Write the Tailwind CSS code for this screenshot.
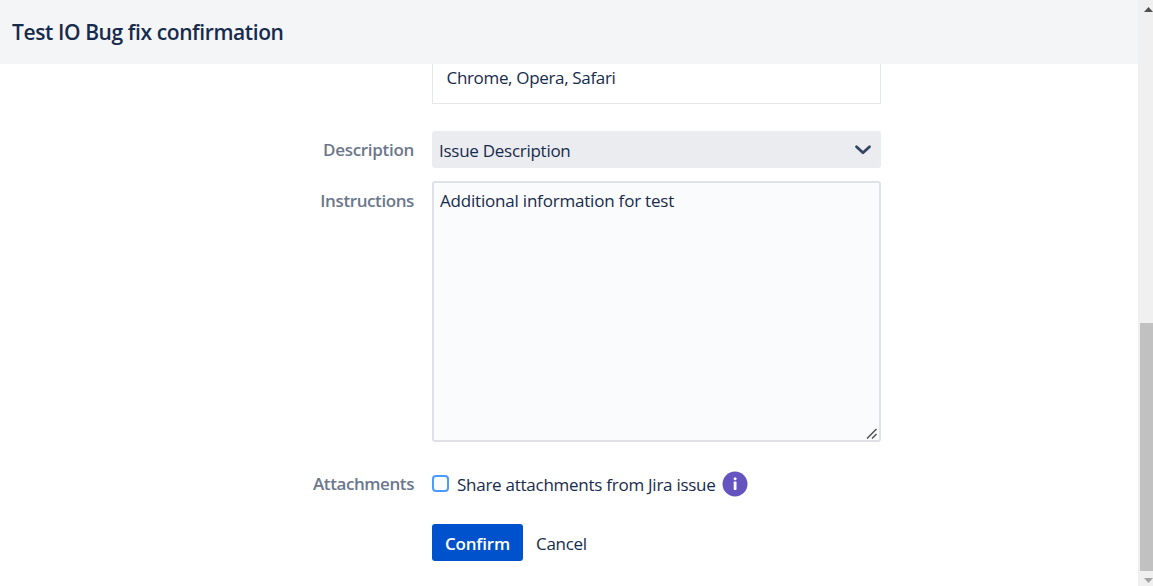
<!DOCTYPE html>
<html lang="en">
<head>
<meta charset="utf-8">
<title>Test IO Bug fix confirmation</title>
<script src="https://cdn.jsdelivr.net/npm/@tailwindcss/browser@4"></script>
</head>
<body class="flex h-[586px] w-[1153px] overflow-hidden bg-white font-['Open_Sans','Noto_Sans',sans-serif] text-[17px] leading-6 text-[#172b4d]">
<main class="flex h-full w-[1138px] flex-col">
  <header class="flex h-16 shrink-0 items-center bg-[#f4f5f7] pl-3">
    <h1 class="whitespace-nowrap text-[21px] font-semibold leading-7 tracking-[-0.4px]">Test IO Bug fix confirmation</h1>
  </header>
  <form class="grid grid-cols-[414px_449px] gap-x-[18px] whitespace-nowrap">
    <div class="col-start-2 h-10 border border-t-0 border-[#e4e6ea] pl-[13.5px] pt-[2px] tracking-[-0.33px]"><span>Chrome, Opera, Safari</span></div>

    <label class="mt-[27px] pt-[7px] text-right font-semibold tracking-[-0.3px] text-[#6b778c]"><span>Description</span></label>
    <div class="mt-[27px] flex h-[37px] items-center justify-between rounded-[3px] bg-[#ebecf0] pl-[7px] pr-[9px] pt-px tracking-[-0.27px]">
      <span class="mt-px">Issue Description</span>
      <svg class="-mt-px h-[12px] w-[18px]" viewBox="0 0 18 12" fill="none" stroke="#344563" stroke-width="2.8" stroke-linecap="round" stroke-linejoin="round"><path d="M2.5 2.8 9 8.8l6.500-6"/></svg>
    </div>

    <label class="mt-[13px] pt-[8px] text-right font-semibold tracking-[-0.4px] text-[#6b778c]"><span>Instructions</span></label>
    <div class="mt-[13px] flex h-[261px] items-start justify-between rounded-[3px] border-2 border-[#dfe1e6] bg-[#fafbfc] pl-[6px] pr-[1px] pt-[6px] tracking-[-0.2px]">
      <span>Additional information for test</span>
      <svg class="h-3 w-3 self-end" viewBox="0 0 12 12" fill="none" stroke="#505050" stroke-width="1.500"><path d="M1 10.500 10.500 1M6 10.500l4.500-4.500"/></svg>
    </div>

    <label class="mt-[30px] text-right font-semibold tracking-[-0.42px] text-[#6b778c]"><span>Attachments</span></label>
    <div class="mt-[29px] flex h-[26px] items-center">
      <i class="-mt-px block h-[17px] w-[17px] rounded-[4px] border-2 border-[#4c9aff] bg-[#fafbfc]"></i>
      <span class="ml-2 mt-[2px] w-[265px] tracking-[-0.26px]"><span>Share attachments from Jira issue</span></span>
      <svg class="h-[26px] w-[26px]" viewBox="0 0 26 26"><circle cx="13" cy="13" r="12.500" fill="#6554c0"/><rect x="11.700" y="10.500" width="2.800" height="8.500" rx=".7" fill="#fff"/><circle cx="13.100" cy="7.800" r="1.500" fill="#fff"/></svg>
    </div>

    <div class="col-start-2 mt-[27px] flex h-[37px] items-center">
      <button type="button" class="h-[37px] w-[91px] rounded-[3px] bg-[#0052cc] pt-[2px] font-semibold tracking-[-0.2px] text-white"><span>Confirm</span></button>
      <button type="button" class="ml-[13px] pt-[2px] tracking-[-0.3px]"><span>Cancel</span></button>
    </div>
  </form>
</main>
<aside class="flex h-full w-[15px] flex-col items-end bg-[#f0f0f0]">
  <svg class="mt-[7px] h-[5px] w-[9px]" viewBox="0 0 9 5" fill="#505050"><path d="M0 5 4.500 0 9 5z"/></svg>
  <div class="mt-[311px] h-[248px] w-[13px] bg-[#c1c1c1]"></div>
  <svg class="mt-[7px] h-[5px] w-[9px]" viewBox="0 0 9 5" fill="#a3a3a3"><path d="M0 0h9L4.500 5z"/></svg>
</aside>
</body>
</html>
